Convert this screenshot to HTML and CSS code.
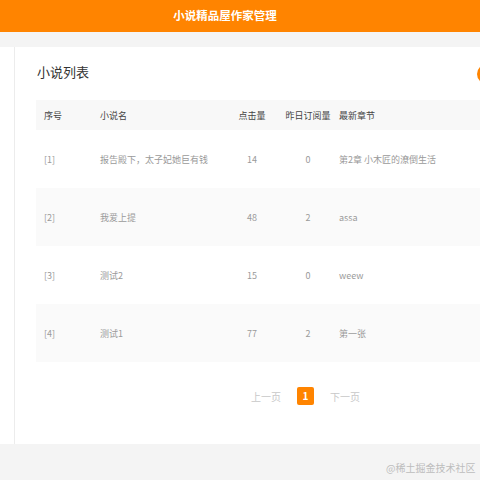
FILE: index.html
```html
<!DOCTYPE html>
<html lang="zh-CN">
<head>
<meta charset="utf-8">
<title>小说精品屋作家管理</title>
<link rel="stylesheet" href="styles.css">
</head>
<body>
<div class="page">
  <header class="topbar">
    <div class="topbar-inner">小说精品屋作家管理</div>
  </header>
  <div class="band"></div>
  <div class="main">
    <aside class="sidebar"></aside>
    <section class="content">
      <div class="title-row">
        <h2 class="title">小说列表</h2>
        <span class="add-btn"></span>
      </div>
      <table class="list">
        <colgroup>
          <col class="c1"><col class="c2"><col class="c3"><col class="c4"><col class="c5">
        </colgroup>
        <thead>
          <tr><th class="left">序号</th><th class="left">小说名</th><th class="mid">点击量</th><th class="mid">昨日订阅量</th><th class="last">最新章节</th></tr>
        </thead>
        <tbody>
          <tr><td class="left">[1]</td><td class="left">报告殿下，太子妃她巨有钱</td><td class="mid">14</td><td class="mid">0</td><td class="last">第2章 小木匠的潦倒生活</td></tr>
          <tr class="alt"><td class="left">[2]</td><td class="left">我爱上提</td><td class="mid">48</td><td class="mid">2</td><td class="last">assa</td></tr>
          <tr><td class="left">[3]</td><td class="left">测试2</td><td class="mid">15</td><td class="mid">0</td><td class="last">weew</td></tr>
          <tr class="alt"><td class="left">[4]</td><td class="left">测试1</td><td class="mid">77</td><td class="mid">2</td><td class="last">第一张</td></tr>
        </tbody>
      </table>
      <nav class="pager">
        <span class="pg-link">上一页</span>
        <span class="pg-cur">1</span>
        <span class="pg-link">下一页</span>
      </nav>
    </section>
  </div>
  <footer class="bottom"></footer>
  <div class="watermark">@稀土掘金技术社区</div>
</div>
</body>
</html>
```
FILE: styles.css
```css
html, body {
  margin: 0;
  padding: 0;
  width: 480px;
  height: 480px;
  overflow: hidden;
  background: #f4f4f4;
  font-family: "Noto Sans CJK SC", "Noto Sans", sans-serif;
}
.page {
  position: relative;
  width: 520px;
  height: 480px;
}
.topbar {
  height: 32px;
  background: #ff8400;
}
.topbar-inner {
  width: 450px;
  text-align: center;
  color: #fff;
  font-size: 11.5px;
  font-weight: bold;
  line-height: 31px;
}
.band {
  height: 15px;
  background: #f4f4f4;
}
.main {
  display: flex;
  height: 397px;
  background: #fff;
}
.sidebar {
  flex: none;
  width: 14px;
  border-right: 1px solid #ececec;
  background: #fff;
}
.content {
  flex: 1;
  min-width: 0;
  padding: 14px 23px 0 21px;
}
.title-row {
  display: flex;
  align-items: center;
  justify-content: space-between;
  height: 22px;
  margin-bottom: 17px;
}
.title {
  margin: 0 0 0 1px;
  font-size: 13px;
  font-weight: normal;
  color: #333;
  line-height: 22px;
}
.add-btn {
  flex: none;
  width: 20px;
  height: 20px;
  border-radius: 50%;
  background: #ff8400;
  margin-top: 4px;
}
.list {
  width: 490px;
  border-collapse: collapse;
  table-layout: fixed;
  font-size: 9px;
}
.c1 { width: 56px; }
.c2 { width: 130px; }
.c3 { width: 60px; }
.c4 { width: 52px; }
.list thead tr {
  background: #f8f8f8;
}
.list th {
  height: 30px;
  padding: 0;
  font-weight: normal;
  color: #444;
}
.list td {
  height: 58px;
  padding: 0;
  color: #9a9a9a;
}
.list tr.alt {
  background: #fafafa;
}
.left { text-align: left; padding-left: 8px !important; }
.mid { text-align: center; }
.last { text-align: left; padding-left: 5px !important; }
.pager {
  display: flex;
  align-items: center;
  margin-top: 25px;
  padding-left: 215px;
  height: 18px;
}
.pg-link {
  font-size: 10px;
  color: #c8c8c8;
}
.pg-cur {
  width: 17px;
  height: 18px;
  margin: 0 16px;
  border-radius: 2px;
  background: #ff8400;
  color: #fff;
  font-size: 10px;
  font-weight: bold;
  line-height: 18px;
  text-align: center;
}
.bottom {
  height: 36px;
  background: #f4f4f4;
}
.watermark {
  position: absolute;
  left: 386px;
  top: 461px;
  font-size: 10px;
  line-height: 14px;
  color: #bdbdbd;
  white-space: nowrap;
}
```
